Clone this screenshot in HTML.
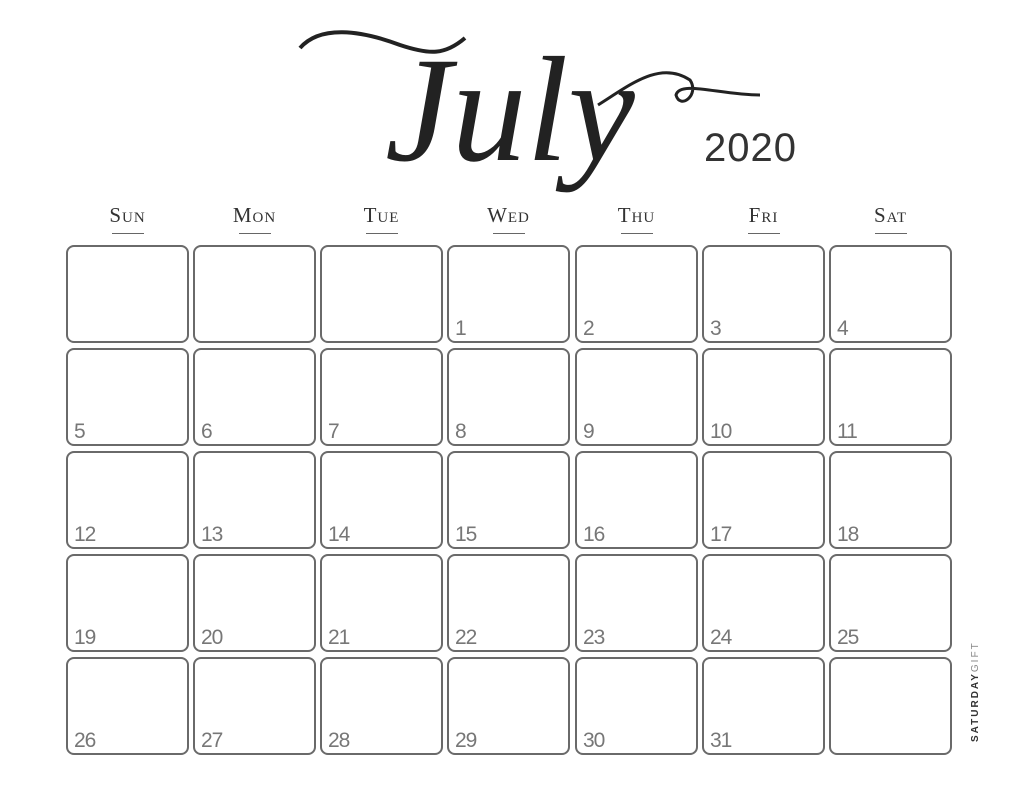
<!DOCTYPE html>
<html><head><style>
body{margin:0;width:1024px;height:790px;background:#fff;position:relative;overflow:hidden;font-family:"Liberation Sans",sans-serif}
.c{position:absolute;width:119px;height:94px;border:2px solid #6a6a6a;border-radius:8px;box-sizing:content-box}
.n{position:absolute;left:6px;bottom:0px;font-size:21px;color:#777;font-family:"Liberation Sans",sans-serif;letter-spacing:-1px}
.h{position:absolute;top:203px;width:123px;text-align:center;font-family:"Liberation Serif",serif;font-variant:small-caps;font-size:21px;color:#333;letter-spacing:1px}
.h:after{content:"";position:absolute;left:46px;top:30px;width:32px;border-top:1px solid #666}
</style></head><body>
<svg width="1024" height="240" style="position:absolute;left:0;top:0">
<path d="M300 48 C320 25 360 30 400 45 C430 55 445 55 465 38" fill="none" stroke="#222" stroke-width="4"/>
<path d="M598 105 C630 85 660 60 690 80 C700 95 680 110 676 95 C680 80 720 95 760 95" fill="none" stroke="#222" stroke-width="3"/>
<text x="385" y="160" font-family="Liberation Serif,serif" font-style="italic" font-size="150" fill="#222">July</text>
</svg>
<div style="position:absolute;left:704px;top:126px;font-size:40px;color:#333;letter-spacing:1px">2020</div>
<div class="h" style="left:66px">Sun</div>
<div class="h" style="left:193px">Mon</div>
<div class="h" style="left:320px">Tue</div>
<div class="h" style="left:447px">Wed</div>
<div class="h" style="left:575px">Thu</div>
<div class="h" style="left:702px">Fri</div>
<div class="h" style="left:829px">Sat</div>
<div id="g"></div>
<div style="position:absolute;left:970px;top:742px;transform:rotate(-90deg);transform-origin:0 0;font-size:10px;letter-spacing:2px;color:#333;white-space:nowrap"><b>SATURDAY</b><span style="color:#888">GIFT</span></div>
<script>
var xs=[66,193,320,447,575,702,829],ys=[245,348,451,554,657],h="";
for(var r=0;r<5;r++)for(var c=0;c<7;c++){var d=r*7+c-2;h+='<div class="c" style="left:'+xs[c]+'px;top:'+ys[r]+'px">'+(d>=1&&d<=31?'<span class="n">'+d+'</span>':'')+'</div>';}
document.getElementById("g").innerHTML=h;
</script>
</body></html>
